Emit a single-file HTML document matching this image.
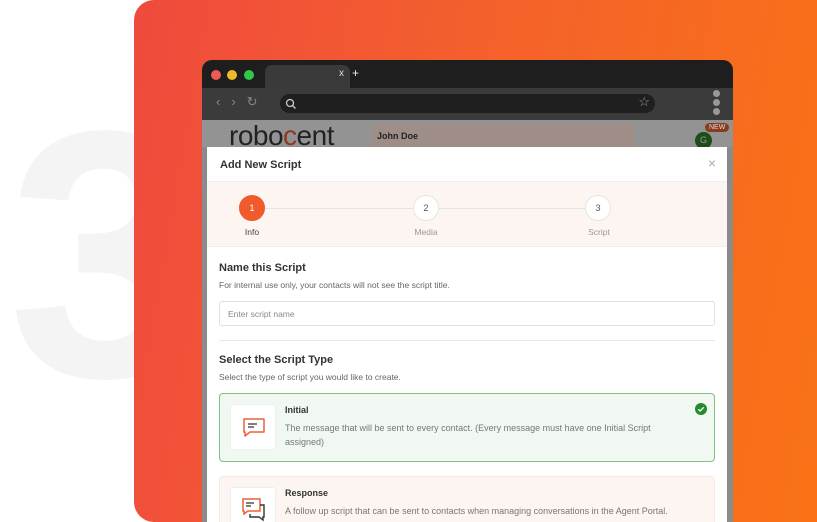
<!DOCTYPE html>
<html><head><meta charset="utf-8"><style>
*{box-sizing:border-box;margin:0;padding:0}
body{width:817px;height:522px;overflow:hidden;background:#fff;font-family:"Liberation Sans",sans-serif;position:relative}
.three{position:absolute;left:8px;top:78px;font-size:352px;font-weight:bold;color:#f4f4f4;line-height:1}
.bg{position:absolute;left:134px;top:0;width:683px;height:522px;border-radius:20px 0 0 20px;background:linear-gradient(100deg,#ef4a3e 0%,#f4602c 45%,#f97316 100%)}
.win{position:absolute;left:202px;top:60px;width:531px;height:462px;border-radius:10px 10px 0 0;background:#1e1e1e;overflow:hidden}
.dot{position:absolute;top:10px;width:10px;height:10px;border-radius:50%}
.tab{position:absolute;left:63px;top:5px;width:85px;height:23px;background:#3a3a3a;border-radius:7px 7px 0 0;color:#ddd;font-size:10px;text-align:right;padding:3px 6px}
.tb{position:absolute;left:0;top:28px;width:531px;height:32px;background:#3b3b3b}
.addr{position:absolute;left:78px;top:6px;width:375px;height:19px;border-radius:10px;background:#1f1f1f}
.page{position:absolute;left:0;top:60px;width:531px;height:402px;background:#8b8b8b;overflow:hidden}
.hdr{position:absolute;left:0;top:0;width:531px;height:27px;background:#939393}
.modal{position:absolute;left:5px;top:27px;width:520px;height:400px;background:#fff}
.mh{height:35px;border-bottom:1px solid #eee;box-shadow:0 2px 4px rgba(0,0,0,.06);padding:12px 13px;font-size:11px;font-weight:bold;color:#333;position:relative}
.step{height:65px;background:#fdf5f1;border-bottom:1px solid #eee;position:relative}
.c{position:absolute;top:13px;width:26px;height:26px;border-radius:50%;background:#fff;border:1px solid #e5e5e5;font-size:9px;text-align:center;line-height:24px;color:#555}
.lbl{position:absolute;top:45px;font-size:8.5px;color:#999;width:60px;text-align:center}
.ln{position:absolute;top:26px;height:1px;background:#e4e4e4}
.body{padding:15px 12px}
h4{font-size:11px;color:#333;margin-bottom:6px}
.sub{font-size:8.5px;color:#666}
.inp{margin-top:11px;height:25px;border:1px solid #e0e0e0;border-radius:3px;font-size:8.5px;color:#888;padding:7px 8px}
.hr{height:1px;background:#e8e8e8;margin:14px 0 13px}
.card{position:relative;height:69px;border-radius:4px;margin-top:11px;padding:11px 40px 0 65px}
.card+.card{margin-top:14px}
.ic{position:absolute;left:10px;top:10px;width:46px;height:46px;background:#fff;border:1px solid #eee;border-radius:3px}
.card b{font-size:9px;color:#333;display:block;margin-bottom:6px}
.card p{font-size:9px;color:#777;line-height:14px}
</style></head><body>
<div class="three">3</div>
<div class="bg"></div>
<div class="win">
 <div class="dot" style="left:9px;background:#ee5b57"></div>
 <div class="dot" style="left:25px;background:#f0b928"></div>
 <div class="dot" style="left:42px;background:#33c748"></div>
 <div class="tab">x</div>
 <div style="position:absolute;left:150px;top:6px;color:#eee;font-size:12px">+</div>
 <div class="tb">
  <div style="position:absolute;left:14px;top:6px;color:#888;font-size:13px;letter-spacing:11px">‹›↻</div>
  <div class="addr"><svg width="12" height="12" style="position:absolute;left:5px;top:4px" viewBox="0 0 12 12"><circle cx="5" cy="5" r="3.5" fill="none" stroke="#ccc" stroke-width="1.3"/><path d="M7.5 7.5L10.5 10.5" stroke="#ccc" stroke-width="1.3"/></svg><span style="position:absolute;right:5px;top:0;color:#999;font-size:13px">☆</span></div>
  <div style="position:absolute;left:511px;top:2px;width:7px">
   <div style="width:7px;height:7px;border-radius:50%;background:#999;margin-bottom:2px"></div><div style="width:7px;height:7px;border-radius:50%;background:#999;margin-bottom:2px"></div><div style="width:7px;height:7px;border-radius:50%;background:#999"></div></div>
 </div>
 <div class="page">
  <div class="hdr">
   <div style="position:absolute;left:27px;top:0px;font-size:28px;color:#222;letter-spacing:-0.5px">robo<span style="color:#8a3a20">c</span>ent</div>
   <div style="position:absolute;left:170px;top:4px;width:262px;height:24px;background:#9f8e88;border-radius:3px;font-size:9px;color:#222;padding:7px 5px;font-weight:bold">John Doe</div>
   <div style="position:absolute;left:493px;top:12px;width:17px;height:17px;border-radius:50%;background:#1d4d19;color:#9a9a9a;font-size:9px;text-align:center;line-height:17px">G</div>
   <div style="position:absolute;left:503px;top:3px;background:#8a3a20;color:#ddd;font-size:7px;border-radius:6px;padding:1px 4px">NEW</div>
  </div>
  <div class="modal">
   <div class="mh">Add New Script<span style="position:absolute;right:11px;top:8px;color:#aaa;font-size:14px;font-weight:normal">×</span></div>
   <div class="step">
    <div class="ln" style="left:58px;width:148px"></div><div class="ln" style="left:232px;width:146px"></div>
    <div class="c" style="left:32px;background:#f15a2b;border-color:#f15a2b;color:#fff">1</div>
    <div class="c" style="left:206px">2</div>
    <div class="c" style="left:378px">3</div>
    <div class="lbl" style="left:15px;color:#444">Info</div>
    <div class="lbl" style="left:189px">Media</div>
    <div class="lbl" style="left:362px">Script</div>
   </div>
   <div class="body">
    <h4>Name this Script</h4>
    <div class="sub">For internal use only, your contacts will not see the script title.</div>
    <div class="inp">Enter script name</div>
    <div class="hr"></div>
    <h4>Select the Script Type</h4>
    <div class="sub">Select the type of script you would like to create.</div>
    <div class="card" style="background:#f1f8f1;border:1px solid #7cc57f">
     <div class="ic"><svg width="46" height="46" viewBox="0 0 46 46"><path d="M13 14h20v13H19l-5 4v-4h-1z" fill="none" stroke="#e8643a" stroke-width="1.5" stroke-linejoin="round"/><path d="M17 19h9M17 22h6" stroke="#333" stroke-width="1.3"/></svg></div>
     <b>Initial</b><p>The message that will be sent to every contact. (Every message must have one Initial Script assigned)</p>
     <svg width="12" height="12" style="position:absolute;right:7px;top:9px" viewBox="0 0 12 12"><circle cx="6" cy="6" r="6" fill="#228b2a"/><path d="M3.3 6.2l1.8 1.8 3.6-3.6" stroke="#fff" stroke-width="1.4" fill="none"/></svg>
    </div>
    <div class="card" style="background:#fdf5f1;border:1px solid #f6e8e2">
     <div class="ic"><svg width="46" height="46" viewBox="0 0 46 46"><path d="M12 11h17v12H17l-4 3v-3h-1z" fill="none" stroke="#e8643a" stroke-width="1.5"/><path d="M29 17h4v12h-1v3l-4-3h-9v-3" fill="none" stroke="#333" stroke-width="1.4"/><path d="M15 15h8M15 18h5" stroke="#333" stroke-width="1.3"/></svg></div>
     <b>Response</b><p>A follow up script that can be sent to contacts when managing conversations in the Agent Portal.</p>
    </div>
   </div>
  </div>
 </div>
</div>
</body></html>
